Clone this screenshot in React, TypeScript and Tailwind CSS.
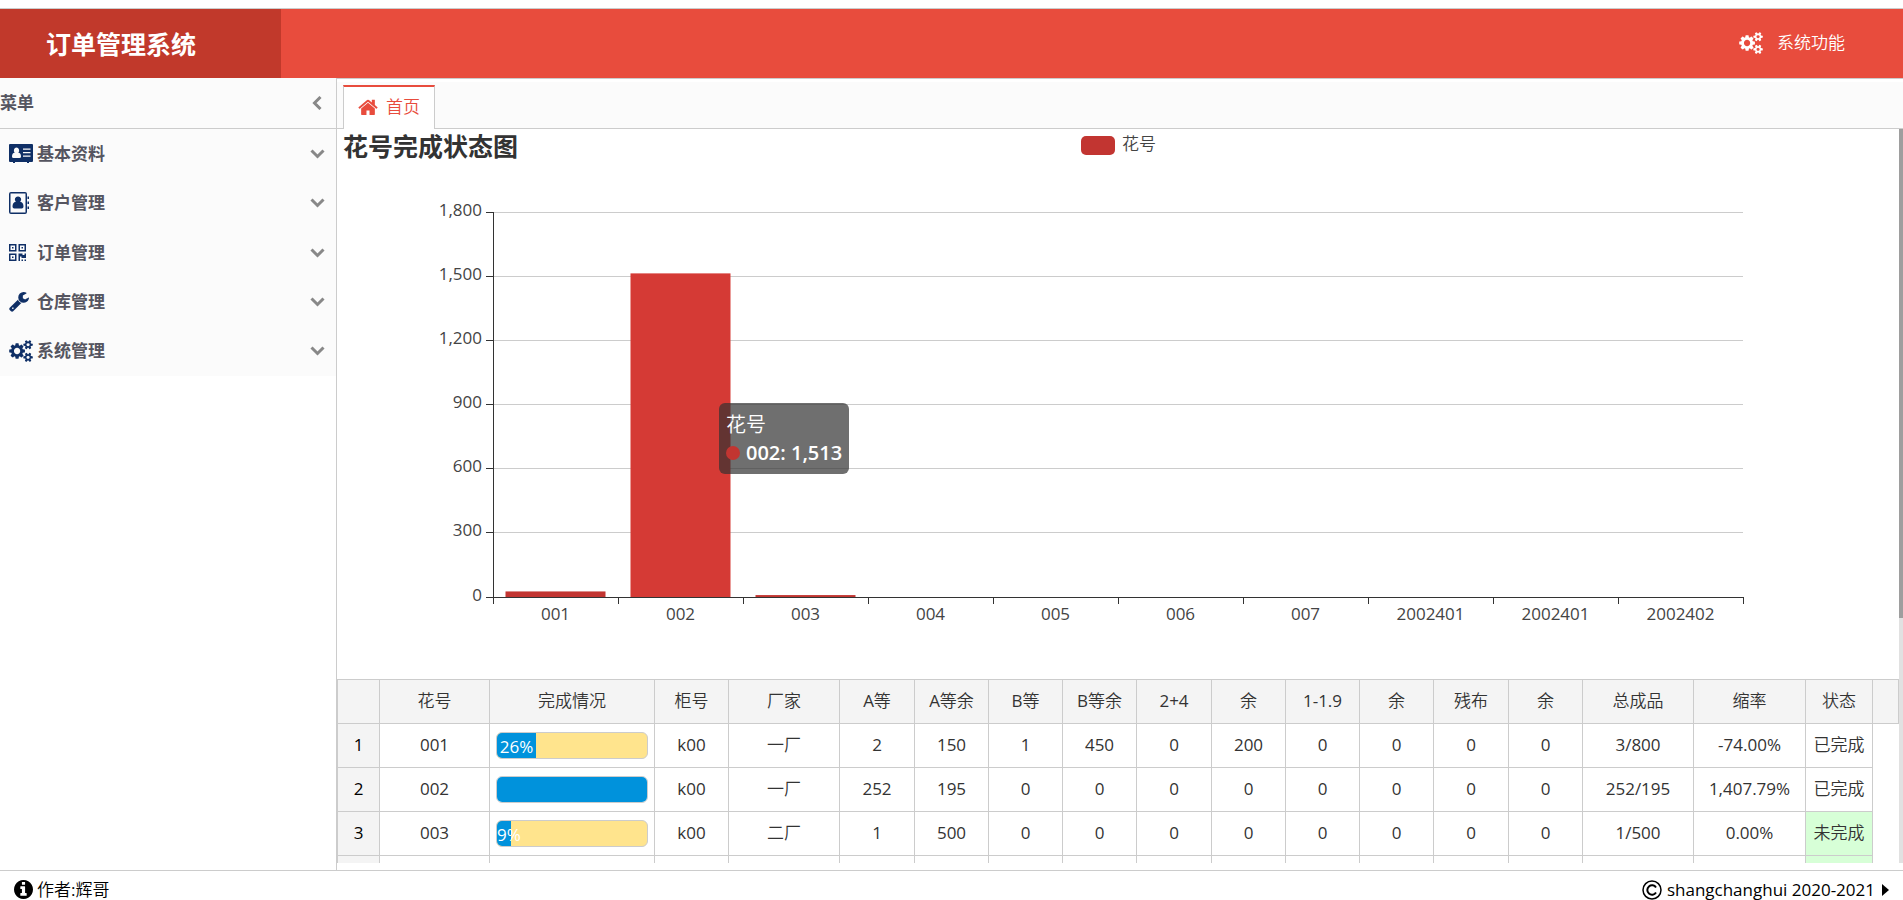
import React from "react";

const icons = {
  home: {
    viewBox: "64 192 1664 1344",
    d: "M1472 992v480q0 26-19 45t-45 19h-384v-384h-256v384h-384q-26 0-45-19t-19-45v-480q0-1 .5-3t.5-3l575-474 575 474q1 2 1 6zm223-69l-62 74q-8 9-21 11h-3q-13 0-21-7l-692-577-692 577q-12 8-24 7-13-2-21-11l-62-74q-8-10-7-23.5t11-21.5l719-599q32-26 76-26t76 26l244 204v-195q0-14 9-23t23-9h192q14 0 23 9t9 23v408l219 182q10 8 11 21.5t-7 23.5z",
  },
  cogs: {
    viewBox: "0 0 1920 1792",
    d: "M896 896q0-106-75-181t-181-75-181 75-75 181 75 181 181 75 181-75 75-181zm768 512q0-52-38-90t-90-38-90 38-38 90q0 53 37.5 90.5t90.5 37.5 90.5-37.5 37.5-90.5zm0-1024q0-52-38-90t-90-38-90 38-38 90q0 53 37.5 90.5t90.5 37.5 90.5-37.5 37.5-90.5zm-384 421v185q0 10-7 19.5t-16 10.5l-155 24q-11 35-32 76 34 48 90 115 7 11 7 20 0 12-7 19-23 30-82.5 89.5t-78.5 59.5q-11 0-21-7l-115-90q-37 19-77 31-11 108-23 155-7 24-30 24h-186q-11 0-20-7.5t-10-17.5l-23-153q-34-10-75-31l-118 89q-7 7-20 7-11 0-21-8-144-133-144-160 0-9 7-19 10-14 41-53t47-61q-23-44-35-82l-152-24q-10-1-17-9.5t-7-19.5v-185q0-10 7-19.5t16-10.5l155-24q11-35 32-76-34-48-90-115-7-11-7-20 0-12 7-20 22-30 82-89t79-59q11 0 21 7l115 90q34-18 77-32 11-108 23-154 7-24 30-24h186q11 0 20 7.5t10 17.5l23 153q34 10 75 31l118-89q8-7 20-7 11 0 21 8 144 133 144 160 0 8-7 19-12 16-42 54t-45 60q23 48 34 82l152 23q10 2 17 10.5t7 19.5zm640 533v140q0 16-149 31-12 27-30 52 51 113 51 138 0 4-4 7-122 71-124 71-8 0-46-47t-52-68q-20 2-30 2t-30-2q-14 21-52 68t-46 47q-2 0-124-71-4-3-4-7 0-25 51-138-18-25-30-52-149-15-149-31v-140q0-16 149-31 13-29 30-52-51-113-51-138 0-4 4-7 4-2 35-20t59-34 30-16q8 0 46 46.5t52 67.5q20-2 30-2t30 2q51-71 92-112l6-2q4 0 124 70 4 3 4 7 0 25-51 138 17 23 30 52 149 15 149 31zm0-1024v140q0 16-149 31-12 27-30 52 51 113 51 138 0 4-4 7-122 71-124 71-8 0-46-47t-52-68q-20 2-30 2t-30-2q-14 21-52 68t-46 47q-2 0-124-71-4-3-4-7 0-25 51-138-18-25-30-52-149-15-149-31v-140q0-16 149-31 13-29 30-52-51-113-51-138 0-4 4-7 4-2 35-20t59-34 30-16q8 0 46 46.5t52 67.5q20-2 30-2t30 2q51-71 92-112l6-2q4 0 124 70 4 3 4 7 0 25-51 138 17 23 30 52 149 15 149 31z",
  },
  wrench: {
    viewBox: "64 128 1664 1664",
    d: "M448 1472q0-26-19-45t-45-19-45 19-19 45 19 45 45 19 45-19 19-45zm644-420l-682 682q-37 37-90 37-52 0-91-37l-106-108q-38-36-38-90 0-53 38-91l681-681q39 98 114.5 173.5t173.5 114.5zm634-435q0 39-23 106-47 134-164.5 217.5t-258.5 83.5q-185 0-316.5-131.5t-131.5-316.5 131.5-316.5 316.5-131.5q58 0 121.5 16.5t107.5 46.5q16 11 16 28t-16 28l-293 169v224l193 107q5-3 79-48.5t135.5-81 70.5-35.5q15 0 23.5 10t8.5 25z",
  },
  info: {
    viewBox: "128 128 1536 1536",
    d: "M1152 1376v-160q0-14-9-23t-23-9h-96v-512q0-14-9-23t-23-9h-320q-14 0-23 9t-9 23v160q0 14 9 23t23 9h96v320h-96q-14 0-23 9t-9 23v160q0 14 9 23t23 9h448q14 0 23-9t9-23zm-128-896v-160q0-14-9-23t-23-9h-192q-14 0-23 9t-9 23v160q0 14 9 23t23 9h192q14 0 23-9t9-23zm640 416q0 209-103 385.5t-279.5 279.5-385.5 103-385.5-103-279.5-279.5-103-385.5 103-385.5 279.5-279.5 385.5-103 385.5 103 279.5 279.5 103 385.5z",
  },
  card: {
    viewBox: "0 0 24 19",
    d: "M1 0h22q1 0 1 1v16q0 1-1 1h-3v1h-2v-1h-12v1h-2v-1h-3q-1 0-1-1v-16q0-1 1-1zM7.500 3.500a2.700 3 0 0 0-1.800 5.200q-2.700.3-2.700 3.800 0 1.500 1.500 1.500h6q1.500 0 1.500-1.500 0-3.500-2.700-3.800a2.700 3 0 0 0-1.800-5.200zM14 4.500v1.300h7.500v-1.300zM14 8v1.300h7.500v-1.300zM14 11.500v1.300h7.500v-1.300z",
  },
  book: {
    viewBox: "0 0 20 22",
    d: "M2 0h14q2 0 2 2v18q0 2-2 2h-14q-2 0-2-2v-18q0-2 2-2zM1.500 1.500v19h15v-19zM18.500 4.500h1.500v2.500h-1.500zM18.500 9.500h1.500v2.500h-1.500zM18.500 14.500h1.500v2.500h-1.500zM9 4.500a3 3 0 0 1 2.200 5.200q3.300.5 3.300 4.800 0 2-1.800 2h-7.400q-1.800 0-1.800-2 0-4.300 3.300-4.800a3 3 0 0 1 2.200-5.200z",
  },
  qrcode: {
    viewBox: "0 0 17 17",
    d: "M0 0h7.500v7.500h-7.500zM1.500 1.500v4.500h4.500v-4.500zM3 3h1.500v1.500h-1.500zM9.500 0h7.500v7.500h-7.500zM11 1.500v4.500h4.500v-4.500zM12.500 3h1.500v1.500h-1.500zM0 9.500h7.500v7.500h-7.500zM1.500 11v4.500h4.500v-4.500zM3 12.500h1.500v1.500h-1.500zM9.500 9.500h4v1.500h2v-1.500h1.500v4.500h-4.500v-1.500h-1.500v4.500h-1.500zM12.500 15.500h1.500v1.500h-1.500zM15.500 15.500h1.500v1.500h-1.500z",
  },
};

function Icon({ name, className }: { name: keyof typeof icons; className: string }) {
  return (
    <svg viewBox={icons[name].viewBox} className={className} fill="currentColor" fillRule="evenodd" aria-hidden="true">
      <path d={icons[name].d} />
    </svg>
  );
}

const menuItems: { name: string; icon: keyof typeof icons; size: string }[] = [
  { name: "基本资料", icon: "card", size: "w-6 h-[19px]" },
  { name: "客户管理", icon: "book", size: "w-5 h-[22px]" },
  { name: "订单管理", icon: "qrcode", size: "w-[17px] h-[17px]" },
  { name: "仓库管理", icon: "wrench", size: "w-5 h-5" },
  { name: "系统管理", icon: "cogs", size: "w-6 h-[22px]" },
];

// the DemiLight family has no bold cut of its own
const boldFont = "font-['Open_Sans','Noto_Sans_CJK_SC',sans-serif] font-bold";

function Header() {
  return (
    <header className="mt-2 flex h-[70px] shrink-0 items-stretch justify-between border-t border-[#ccc] bg-[#e84c3d] text-white">
      <h1 className={`flex w-[281px] items-center bg-[#c1392b] pl-[46px] text-[25px] ${boldFont}`}>订单管理系统</h1>
      <button className="flex items-center gap-3.5 pr-[58px] pb-0.5 text-[17px]">
        <Icon name="cogs" className="h-[22px] w-6" />
        系统功能
      </button>
    </header>
  );
}

function Sidebar() {
  return (
    <aside className={`w-[337px] shrink-0 border-r border-[#ccc] text-[#555560] ${boldFont}`}>
      <div className="flex h-[51px] items-center justify-between border-b border-[#ccc] bg-[#fbfbfb] pr-3.5">
        <h2>菜单</h2>
        <button aria-label="收起菜单">
          <svg viewBox="0 0 10 14" className="h-3.5 w-2.5" fill="none" stroke="#888" strokeWidth="3">
            <path d="M8.500 1L2.500 7l6 6" />
          </svg>
        </button>
      </div>
      <nav className="flex h-[247px] flex-col bg-[#fbfbfb]">
        {menuItems.map((item) => (
          <a key={item.name} href="#" className="flex flex-1 items-center pr-[11px] pl-[9px]">
            <span className="w-7 text-[#0f2f66]">
              <Icon name={item.icon} className={item.size} />
            </span>
            {item.name}
            <svg viewBox="0 0 15 10" className="ml-auto h-2.5 w-[15px]" fill="none" stroke="#888" strokeWidth="3">
              <path d="M1.500 1.500l6 6 6-6" />
            </svg>
          </a>
        ))}
      </nav>
    </aside>
  );
}

const bars = [
  { name: "001", value: 26 },
  { name: "002", value: 1513 },
  { name: "003", value: 9 },
  { name: "004", value: 0 },
  { name: "005", value: 0 },
  { name: "006", value: 0 },
  { name: "007", value: 0 },
  { name: "2002401", value: 0 },
  { name: "2002401", value: 0 },
  { name: "2002402", value: 0 },
];
const yTicks = [0, 300, 600, 900, 1200, 1500, 1800];

// plot area inside the chart's own coordinates
const left = 156;
const right = 1406;
const bottom = 468;
const plotHeight = 385;
const step = (right - left) / bars.length;
const toY = (value: number) => bottom - (value / 1800) * plotHeight;

function Chart() {
  return (
    <div className="relative">
      <svg viewBox="0 0 1562 550" className="block h-auto w-full text-[17px]" fill="#444">
        <text x="6" y="27" fill="#333" className={`text-[25px] ${boldFont}`}>
          花号完成状态图
        </text>
        <rect x="744" y="7" width="34" height="19" rx="5" fill="#c23531" />
        <text x="785" y="21">
          花号
        </text>
        {yTicks.map((tick) => {
          const y = Math.floor(toY(tick)) + 0.5;
          return (
            <g key={tick}>
              <line x1={left} x2={right} y1={y} y2={y} stroke="#ccc" />
              <line x1={left - 7} x2={left} y1={y} y2={y} stroke="#333" />
              <text x={left - 11} y={y + 3.5} textAnchor="end">
                {tick.toLocaleString("en-US")}
              </text>
            </g>
          );
        })}
        {bars.map((bar, i) => (
          <g key={i}>
            <rect
              x={left + step * i + 12.5}
              y={toY(bar.value)}
              width="100"
              height={bottom - toY(bar.value)}
              fill={i === 1 ? "#d53a35" : "#c23531"}
            />
            <text x={left + step * (i + 0.5)} y={bottom + 23} textAnchor="middle">
              {bar.name}
            </text>
          </g>
        ))}
        <path d={`M${left + 0.5} 83V${bottom + 0.5}H${right}`} fill="none" stroke="#333" />
        {[...bars, null].map((_, i) => (
          <line key={i} x1={left + step * i + 0.5} x2={left + step * i + 0.5} y1={bottom} y2={bottom + 7} stroke="#333" />
        ))}
      </svg>
      <div className="absolute top-[274px] left-[382px] rounded-md bg-[#323232]/70 px-[7px] pt-2 pb-[7px] text-xl leading-7 text-white">
        <div>花号</div>
        <div className="flex items-center gap-1.5 font-semibold">
          <span className="h-3.5 w-3.5 rounded-full bg-[#c23531]" />
          002: 1,513
        </div>
      </div>
    </div>
  );
}

const columns = [
  { name: "", width: "w-[42px]" },
  { name: "花号", width: "w-[110px]" },
  { name: "完成情况", width: "w-[165px]" },
  { name: "柜号", width: "w-[74px]" },
  { name: "厂家", width: "w-[111px]" },
  { name: "A等", width: "w-[75px]" },
  { name: "A等余", width: "w-[74px]" },
  { name: "B等", width: "w-[74px]" },
  { name: "B等余", width: "w-[74px]" },
  { name: "2+4", width: "w-[75px]" },
  { name: "余", width: "w-[74px]" },
  { name: "1-1.9", width: "w-[74px]" },
  { name: "余", width: "w-[74px]" },
  { name: "残布", width: "w-[75px]" },
  { name: "余", width: "w-[74px]" },
  { name: "总成品", width: "w-[111px]" },
  { name: "缩率", width: "w-[112px]" },
  { name: "状态", width: "w-[67px]" },
];

const rows = [
  { id: "001", percent: 26, label: "26%", cells: ["k00", "一厂", "2", "150", "1", "450", "0", "200", "0", "0", "0", "0", "3/800", "-74.00%"], status: "已完成" },
  { id: "002", percent: 100, label: "", cells: ["k00", "一厂", "252", "195", "0", "0", "0", "0", "0", "0", "0", "0", "252/195", "1,407.79%"], status: "已完成" },
  { id: "003", percent: 9, label: "9%", cells: ["k00", "二厂", "1", "500", "0", "0", "0", "0", "0", "0", "0", "0", "1/500", "0.00%"], status: "未完成" },
];

function Progress({ percent, label }: { percent: number; label: string }) {
  return (
    <div className="mx-1.5 mt-0.5 h-[27px] overflow-hidden rounded-md border border-[#ccc] bg-[#ffe48d] text-white">
      <div className="flex h-full items-center bg-[#0092dc] pt-0.5 whitespace-nowrap" style={{ width: `${percent}%` }}>
        <span className="mx-auto">{label}</span>
      </div>
    </div>
  );
}

function OrderTable() {
  const cell = "h-[44px] border-r border-b border-[#ccc] p-0 pb-0.5";
  return (
    <table className="w-full table-fixed border-separate border-spacing-0 border-t border-l border-[#ccc] text-center text-[#333]">
      <thead>
        <tr className="bg-[#f4f4f4]">
          {columns.map((column, i) => (
            <th key={i} className={`${cell} ${column.width} font-normal`}>
              {column.name}
            </th>
          ))}
          <th className={cell} />
        </tr>
      </thead>
      <tbody>
        {rows.map((row, i) => (
          <tr key={row.id}>
            <td className={`${cell} bg-[#f4f4f4] text-black`}>{i + 1}</td>
            <td className={cell}>{row.id}</td>
            <td className={cell}>
              <Progress percent={row.percent} label={row.label} />
            </td>
            {row.cells.map((value, j) => (
              <td key={j} className={cell}>
                {value}
              </td>
            ))}
            <td className={`${cell} ${row.status === "未完成" ? "bg-[#d7ffd7]" : ""}`}>{row.status}</td>
            <td />
          </tr>
        ))}
        <tr>
          {columns.map((_, i) => (
            <td key={i} className={`${cell} ${i === 0 ? "bg-[#f4f4f4]" : ""} ${i === 17 ? "bg-[#d7ffd7]" : ""}`} />
          ))}
          <td />
        </tr>
      </tbody>
    </table>
  );
}

function Footer() {
  return (
    <footer className="flex h-[30px] shrink-0 items-center justify-between border-t border-[#ccc] px-3.5 pt-2 text-black">
      <span className="flex items-center gap-1">
        <Icon name="info" className="h-[19px] w-[19px]" />
        作者:辉哥
      </span>
      <span className="flex items-center gap-[5px]">
        <svg viewBox="0 0 20 20" className="h-5 w-5" fill="none" stroke="currentColor" strokeWidth="1.5" aria-hidden="true">
          <circle cx="10" cy="10" r="9" />
          <path d="M14 7.500a4.700 4.700 0 1 0 0 5" strokeWidth="2" />
        </svg>
        shangchanghui 2020-2021
        <svg viewBox="0 0 7 12" className="ml-0.5 h-3 w-[7px]" fill="currentColor" aria-hidden="true">
          <path d="M0 0l7 6-7 6z" />
        </svg>
      </span>
    </footer>
  );
}

export default function App() {
  return (
    <div className="flex h-screen flex-col overflow-hidden bg-white font-['Open_Sans','Noto_Sans_CJK_SC_DemiLight','Noto_Sans_CJK_SC',sans-serif] text-[17px] leading-6">
      <Header />
      <div className="flex min-h-0 flex-1">
        <Sidebar />
        <main className="flex min-w-0 flex-1 flex-col pb-[7px]">
          <div className="h-[51px] shrink-0 border-t border-[#ccc] pt-[3px]">
            <div className="flex h-[47px] items-end border-b border-[#ccc] bg-[#fbfbfb] pl-1.5">
              <a
                href="#"
                className="-mb-px flex h-11 items-center gap-2 border-x border-t-2 border-x-[#ccc] border-t-[#e84c3d] bg-white px-3.5 pb-0.5 text-[#e84c3d]"
              >
                <Icon name="home" className="h-4 w-5" />
                首页
              </a>
            </div>
          </div>
          <div className="flex min-h-0 flex-1">
            <div className="min-w-0 flex-1 overflow-hidden">
              <Chart />
              <OrderTable />
            </div>
            <div className="w-1 bg-[#e1e1e1]">
              <div className="h-2/3 bg-[#9e9e9e]" />
            </div>
          </div>
        </main>
      </div>
      <Footer />
    </div>
  );
}
